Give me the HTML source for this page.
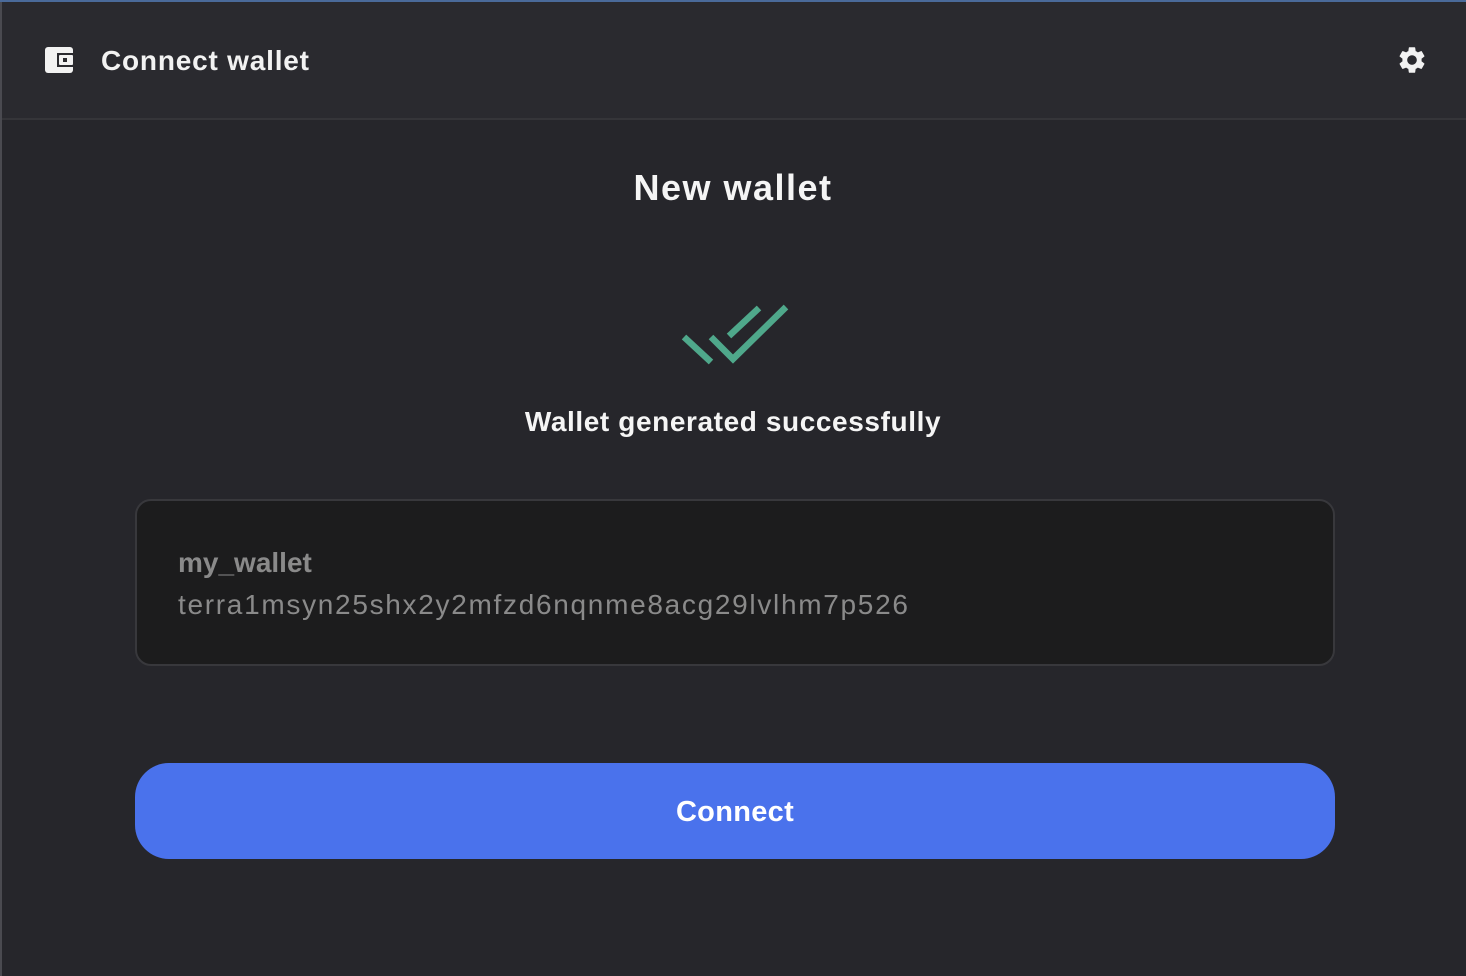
<!DOCTYPE html>
<html><head><meta charset="utf-8"><style>
html,body{margin:0;padding:0;}
body{width:1466px;height:976px;background:#26262b;position:relative;overflow:hidden;font-family:"Liberation Sans",sans-serif;}
.top{position:absolute;left:0;top:0;width:1466px;height:2px;background:#4a6a9a;}
.lb{position:absolute;left:0;top:2px;width:2px;height:974px;background:#4a4a50;}
.hdr{position:absolute;left:2px;top:2px;right:0;height:116px;background:#2a2a2f;border-bottom:2px solid #353539;}
.ht{position:absolute;left:99px;top:43px;font-size:28px;font-weight:bold;color:#f2f2f2;letter-spacing:0.8px;}
.title{position:absolute;left:0;width:1466px;top:167px;text-align:center;font-size:36px;font-weight:bold;color:#f5f5f5;letter-spacing:1.5px;}
.sub{position:absolute;left:0;width:1466px;top:406px;text-align:center;font-size:28px;font-weight:bold;color:#f5f5f5;letter-spacing:0.6px;}
.card{position:absolute;left:135px;top:499px;width:1196px;height:163px;background:#1c1c1d;border:2px solid #38383c;border-radius:16px;}
.n{position:absolute;left:41px;top:46px;font-size:28px;font-weight:bold;color:#8a8a8a;}
.a{position:absolute;left:41px;top:88px;font-size:28px;color:#8a8a8a;letter-spacing:1.7px;}
.btn{position:absolute;left:135px;top:763px;width:1200px;height:96px;background:#4a72ec;border-radius:34px;color:#fff;text-align:center;line-height:98px;font-size:29px;font-weight:bold;letter-spacing:0.3px;}
</style></head><body>
<div class="top"></div>
<div class="hdr">
<svg style="position:absolute;left:41px;top:43px" width="32" height="30" viewBox="0 0 32 30"><rect x="2" y="2" width="28" height="26" rx="3" fill="#f2f2f2"/><rect x="14" y="8" width="16" height="14" fill="#2a2a2f"/><rect x="16" y="10" width="14" height="10" rx="1" fill="#f2f2f2"/><rect x="20" y="13" width="4" height="4" fill="#2a2a2f"/></svg>
<div class="ht">Connect wallet</div>
<svg style="position:absolute;left:1394px;top:42px" width="32" height="32" viewBox="0 0 24 24"><path fill="#f2f2f2" d="M19.14 12.94c.04-.3.06-.61.06-.94 0-.32-.02-.64-.07-.94l2.03-1.58a.49.49 0 0 0 .12-.61l-1.92-3.32a.488.488 0 0 0-.59-.22l-2.39.96c-.5-.38-1.030-.7-1.62-.94l-.36-2.54a.484.484 0 0 0-.48-.41h-3.84c-.24 0-.43.17-.47.41l-.36 2.54c-.59.24-1.13.57-1.62.94l-2.39-.96c-.22-.08-.47 0-.59.22L2.74 8.87c-.12.21-.08.47.12.61l2.030 1.58c-.05.3-.09.63-.09.94s.02.64.07.94l-2.03 1.58a.49.49 0 0 0-.12.61l1.92 3.32c.12.22.37.29.59.22l2.39-.96c.5.38 1.03.7 1.62.94l.36 2.54c.05.24.24.41.48.41h3.84c.24 0 .44-.17.47-.41l.36-2.54c.59-.24 1.13-.56 1.62-.94l2.39.96c.22.08.47 0 .59-.22l1.92-3.32c.12-.22.07-.47-.12-.61l-2.01-1.58zM12 15.6c-1.98 0-3.6-1.62-3.6-3.6s1.62-3.6 3.6-3.6 3.6 1.62 3.6 3.6-1.62 3.6-3.6 3.6z"/></svg>
</div>
<div class="lb"></div>
<div class="title">New wallet</div>
<svg style="position:absolute;left:660px;top:290px" width="150" height="90"><g stroke="#4fa88b" stroke-width="6.5" fill="none" stroke-linecap="butt"><path d="M684 337 L711 362" transform="translate(-660,-290)"/><path d="M711 337 L733 359 L786 307" transform="translate(-660,-290)"/><path d="M729 336 L759 308" transform="translate(-660,-290)"/></g></svg>
<div class="sub">Wallet generated successfully</div>
<div class="card"><div class="n">my_wallet</div><div class="a">terra1msyn25shx2y2mfzd6nqnme8acg29lvlhm7p526</div></div>
<div class="btn">Connect</div>
</body></html>
